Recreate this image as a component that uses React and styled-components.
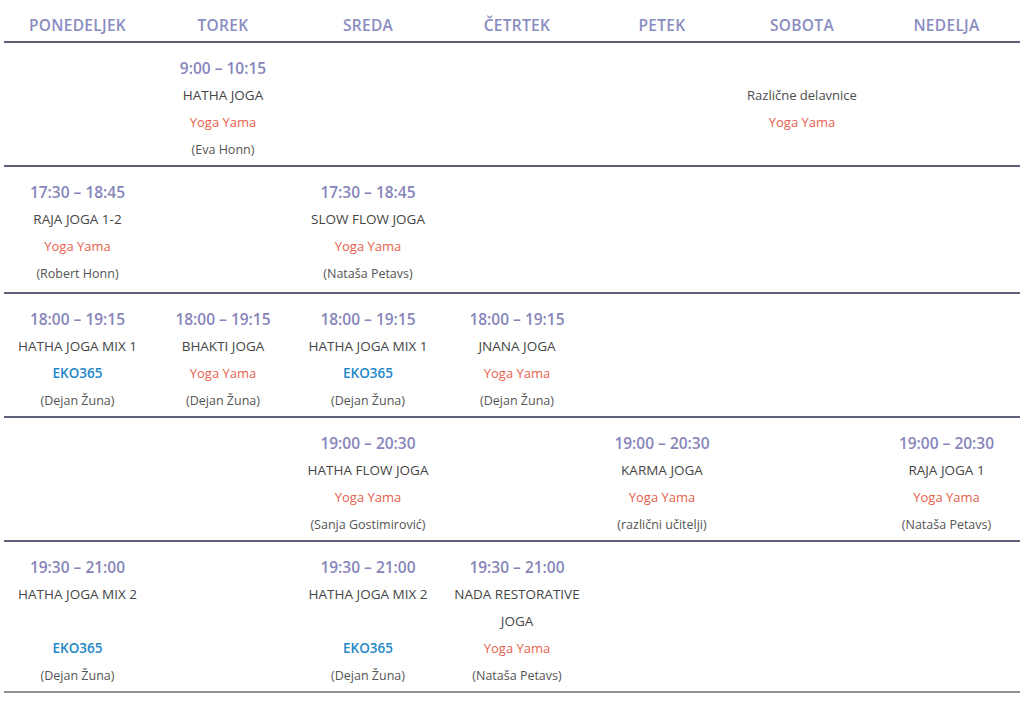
import React from "react";
import styled, { createGlobalStyle } from "styled-components";

const Global = createGlobalStyle`
  html, body { margin: 0; padding: 0; background: #ffffff; }
  body { font-family: "Open Sans", "Noto Sans", sans-serif; }
`;

const Table = styled.div`
  width: 1016px;
  margin-left: 4px;
`;

const Row = styled.div`
  display: grid;
  grid-template-columns: 147px 144px 146px 152px 138px 142px 147px;
  border-bottom: 2px solid ${(p) => (p.$last ? "#8d9097" : "#5c6179")};
  padding: ${(p) => (p.$head ? "16px 0 7px" : `12px 0 ${p.$extra ? 5 : 2}px`)};
`;

const HeadCell = styled.div`
  text-align: center;
  font-size: 15.5px;
  line-height: 18px;
  font-weight: 600;
  letter-spacing: 0.3px;
  color: #8a8dc0;
`;

const Cell = styled.div`
  display: flex;
  flex-direction: column;
  align-items: center;
  justify-content: ${(p) => (p.$center ? "center" : "flex-start")};
  text-align: center;
`;

const Time = styled.div`
  font-size: 15.5px;
  line-height: 27px;
  font-weight: 600;
  color: #8785ba;
`;

const Title = styled.div`
  font-size: 13.5px;
  line-height: 27px;
  font-weight: 400;
  color: #454545;
`;

const Note = styled.div`
  font-size: 13px;
  line-height: 27px;
  font-weight: 400;
  color: #4d4d4d;
`;

const Place = styled.div`
  font-size: ${(p) => (p.$eko ? "13.5px" : "13px")};
  line-height: 27px;
  font-weight: ${(p) => (p.$eko ? 600 : 400)};
  color: ${(p) => (p.$eko ? "#2388c9" : "#e8614e")};
`;

const Teacher = styled.div`
  font-size: 12.5px;
  line-height: 27px;
  color: #555555;
`;

const Blank = styled.div`
  height: 27px;
`;

const days = ["PONEDELJEK", "TOREK", "SREDA", "ČETRTEK", "PETEK", "SOBOTA", "NEDELJA"];

const YY = "Yoga Yama";
const EKO = "EKO365";

const rows = [
  [
    null,
    { time: "9:00 – 10:15", title: "HATHA JOGA", place: YY, teacher: "(Eva Honn)" },
    null,
    null,
    null,
    { note: "Različne delavnice", place: YY, center: true },
    null,
  ],
  [
    { time: "17:30 – 18:45", title: "RAJA JOGA 1-2", place: YY, teacher: "(Robert Honn)" },
    null,
    { time: "17:30 – 18:45", title: "SLOW FLOW JOGA", place: YY, teacher: "(Nataša Petavs)" },
    null,
    null,
    null,
    null,
  ],
  [
    { time: "18:00 – 19:15", title: "HATHA JOGA MIX 1", place: EKO, teacher: "(Dejan Žuna)" },
    { time: "18:00 – 19:15", title: "BHAKTI JOGA", place: YY, teacher: "(Dejan Žuna)" },
    { time: "18:00 – 19:15", title: "HATHA JOGA MIX 1", place: EKO, teacher: "(Dejan Žuna)" },
    { time: "18:00 – 19:15", title: "JNANA JOGA", place: YY, teacher: "(Dejan Žuna)" },
    null,
    null,
    null,
  ],
  [
    null,
    null,
    { time: "19:00 – 20:30", title: "HATHA FLOW JOGA", place: YY, teacher: "(Sanja Gostimirović)" },
    null,
    { time: "19:00 – 20:30", title: "KARMA JOGA", place: YY, teacher: "(različni učitelji)" },
    null,
    { time: "19:00 – 20:30", title: "RAJA JOGA 1", place: YY, teacher: "(Nataša Petavs)" },
  ],
  [
    { time: "19:30 – 21:00", title: "HATHA JOGA MIX 2", blank: true, place: EKO, teacher: "(Dejan Žuna)" },
    null,
    { time: "19:30 – 21:00", title: "HATHA JOGA MIX 2", blank: true, place: EKO, teacher: "(Dejan Žuna)" },
    { time: "19:30 – 21:00", title: ["NADA RESTORATIVE", "JOGA"], place: YY, teacher: "(Nataša Petavs)" },
    null,
    null,
    null,
  ],
];

function Slot({ s }) {
  if (!s) return <Cell />;
  const titles = Array.isArray(s.title) ? s.title : s.title ? [s.title] : [];
  return (
    <Cell $center={s.center}>
      {s.time && <Time>{s.time}</Time>}
      {titles.map((t) => (
        <Title key={t}>{t}</Title>
      ))}
      {s.note && <Note>{s.note}</Note>}
      {s.blank && <Blank />}
      <Place $eko={s.place === EKO}>{s.place}</Place>
      {s.teacher && <Teacher>{s.teacher}</Teacher>}
    </Cell>
  );
}

export default function App() {
  return (
    <>
      <Global />
      <Table>
        <Row $head>
          {days.map((d) => (
            <HeadCell key={d}>{d}</HeadCell>
          ))}
        </Row>
        {rows.map((r, i) => (
          <Row key={i} $extra={i === 1} $last={i === rows.length - 1}>
            {r.map((s, j) => (
              <Slot key={j} s={s} />
            ))}
          </Row>
        ))}
      </Table>
    </>
  );
}
